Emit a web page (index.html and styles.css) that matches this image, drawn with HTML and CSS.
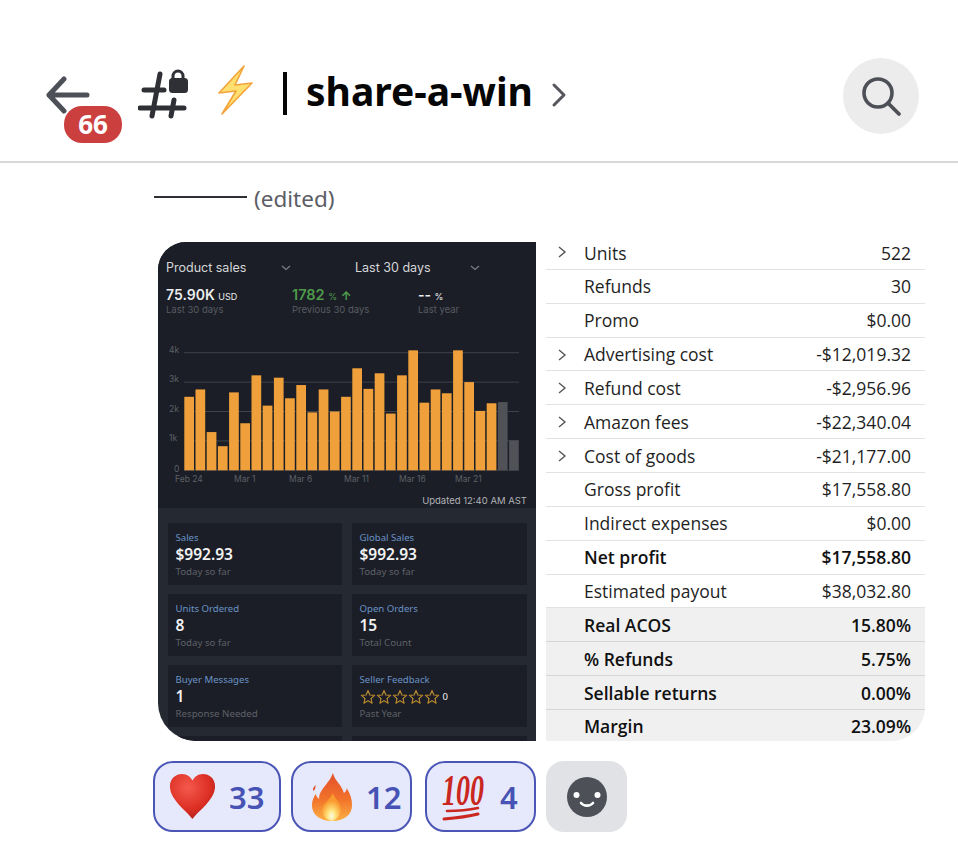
FILE: index.html
```html
<!DOCTYPE html>
<html lang="en">
<head>
    <meta charset="UTF-8">
    <title>share-a-win</title>
    <link rel="stylesheet" href="styles.css">
</head>
<body>
    <svg class="sprites" width="0" height="0">
        <symbol id="star" viewBox="0 0 16 16">
            <path d="M8 1.6l1.9 4.4 4.7.4-3.6 3.1 1.1 4.7L8 11.7l-4.1 2.5L5 9.5 1.4 6.4l4.7-.4z" fill="none" stroke="#b5872f" stroke-width="1.2" stroke-linejoin="round"/>
        </symbol>
        <symbol id="row-chevron" viewBox="0 0 10 14">
            <path d="M2 2l6 5-6 5" fill="none" stroke="#555" stroke-width="1.4"/>
        </symbol>
        <symbol id="dd-chevron" viewBox="0 0 10 6">
            <path d="M1 1l4 3.5L9 1" fill="none" stroke="#7b7f86" stroke-width="1.2"/>
        </symbol>
    </svg>

    <header class="header">
        <div class="back">
            <svg width="44" height="38" viewBox="0 0 44 38">
                <path d="M18 3L3 19l15 16M3 19h38" fill="none" stroke="#4e5058" stroke-width="5" stroke-linecap="round" stroke-linejoin="round"/>
            </svg>
            <span class="badge">66</span>
        </div>
        <svg class="hash" width="52" height="54" viewBox="0 0 52 54">
            <path d="M22 7l-8 42M36 33l-3 16M6 23h20M2 41h44" fill="none" stroke="#2e3035" stroke-width="5" stroke-linecap="round"/>
            <path d="M35 13v-4a5 5 0 0 1 10 0v4" fill="none" stroke="#2e3035" stroke-width="3"/>
            <rect x="31" y="11" width="19" height="15" rx="3.5" fill="#2e3035"/>
        </svg>
        <svg class="bolt" width="40" height="50" viewBox="0 0 40 50">
            <path d="M29 1L4 28l17-2-14 23 30-31-17 2z" fill="#ffdf70" stroke="#f2a33a" stroke-width="1.6" stroke-linejoin="round"/>
        </svg>
        <h1 class="title">share-a-win</h1>
        <svg class="title-chevron" width="16" height="26" viewBox="0 0 16 26">
            <path d="M3 3l10 10L3 23" fill="none" stroke="#55575d" stroke-width="3" stroke-linecap="round" stroke-linejoin="round"/>
        </svg>
        <div class="search">
            <svg width="44" height="44" viewBox="0 0 44 44">
                <circle cx="19" cy="19" r="14" fill="none" stroke="#4e5058" stroke-width="3.6"/>
                <path d="M29 29l11 11" stroke="#4e5058" stroke-width="3.8" stroke-linecap="round"/>
            </svg>
        </div>
    </header>

    <main class="message">
        <div class="edited-line">
            <span class="rule"></span>
            <span class="edited">(edited)</span>
        </div>

        <div class="shots">
            <div class="phone">
                <div class="phone-top">
                    <div class="pickers">
                        <div class="picker">Product sales <svg width="10" height="6"><use href="#dd-chevron"/></svg></div>
                        <div class="picker">Last 30 days <svg width="10" height="6"><use href="#dd-chevron"/></svg></div>
                    </div>
                    <div class="stats">
                        <div>
                            <div class="stat-value">75.90K <small>USD</small></div>
                            <div class="stat-sub">Last 30 days</div>
                        </div>
                        <div>
                            <div class="stat-value green">1782 <small>%</small> <small class="up">↑</small></div>
                            <div class="stat-sub">Previous 30 days</div>
                        </div>
                        <div>
                            <div class="stat-value">-- <small>%</small></div>
                            <div class="stat-sub">Last year</div>
                        </div>
                    </div>

                    <svg class="chart" width="378" height="150" viewBox="0 0 378 150">
                        <g class="grid">
                            <path d="M26 10.7H361M26 40.1H361M26 69.5H361M26 98.9H361M26 128.3H361"/>
                        </g>
                        <g class="axis">
                            <text x="11" y="11">4k</text>
                            <text x="11" y="40">3k</text>
                            <text x="11" y="70">2k</text>
                            <text x="11" y="99">1k</text>
                            <text x="16" y="130">0</text>
                            <text x="17" y="139.5">Feb 24</text>
                            <text x="76" y="139.5">Mar 1</text>
                            <text x="131" y="139.5">Mar 6</text>
                            <text x="186" y="139.5">Mar 11</text>
                            <text x="241" y="139.5">Mar 16</text>
                            <text x="297" y="139.5">Mar 21</text>
                        </g>
                        <g transform="translate(26.3,128.3) scale(1,-29.4)" fill="#f0a03a">
                            <rect x="0" width="9.7" height="2.5"/>
                            <rect x="11.2" width="9.7" height="2.75"/>
                            <rect x="22.4" width="9.7" height="1.3"/>
                            <rect x="33.6" width="9.7" height="0.82"/>
                            <rect x="44.8" width="9.7" height="2.65"/>
                            <rect x="56" width="9.7" height="1.6"/>
                            <rect x="67.2" width="9.7" height="3.23"/>
                            <rect x="78.4" width="9.7" height="2.2"/>
                            <rect x="89.6" width="9.7" height="3.15"/>
                            <rect x="100.8" width="9.7" height="2.45"/>
                            <rect x="112" width="9.7" height="2.9"/>
                            <rect x="123.2" width="9.7" height="1.97"/>
                            <rect x="134.4" width="9.7" height="2.75"/>
                            <rect x="145.6" width="9.7" height="2"/>
                            <rect x="156.8" width="9.7" height="2.5"/>
                            <rect x="168" width="9.7" height="3.47"/>
                            <rect x="179.2" width="9.7" height="2.77"/>
                            <rect x="190.4" width="9.7" height="3.3"/>
                            <rect x="201.6" width="9.7" height="1.93"/>
                            <rect x="212.8" width="9.7" height="3.23"/>
                            <rect x="224" width="9.7" height="4.08"/>
                            <rect x="235.2" width="9.7" height="2.3"/>
                            <rect x="246.4" width="9.7" height="2.75"/>
                            <rect x="257.6" width="9.7" height="2.62"/>
                            <rect x="268.8" width="9.7" height="4.08"/>
                            <rect x="280" width="9.7" height="3"/>
                            <rect x="291.2" width="9.7" height="2.02"/>
                            <rect x="302.4" width="9.7" height="2.28"/>
                            <rect x="313.6" width="9.7" height="2.32" fill="#505257"/>
                            <rect x="324.8" width="9.7" height="1.02" fill="#505257"/>
                        </g>
                    </svg>
                    <div class="updated">Updated 12:40 AM AST</div>
                </div>

                <div class="tiles">
                    <div class="tile">
                        <div class="tile-label">Sales</div>
                        <div class="tile-value">$992.93</div>
                        <div class="tile-sub">Today so far</div>
                    </div>
                    <div class="tile">
                        <div class="tile-label">Global Sales</div>
                        <div class="tile-value">$992.93</div>
                        <div class="tile-sub">Today so far</div>
                    </div>
                    <div class="tile">
                        <div class="tile-label">Units Ordered</div>
                        <div class="tile-value">8</div>
                        <div class="tile-sub">Today so far</div>
                    </div>
                    <div class="tile">
                        <div class="tile-label">Open Orders</div>
                        <div class="tile-value">15</div>
                        <div class="tile-sub">Total Count</div>
                    </div>
                    <div class="tile">
                        <div class="tile-label">Buyer Messages</div>
                        <div class="tile-value">1</div>
                        <div class="tile-sub">Response Needed</div>
                    </div>
                    <div class="tile">
                        <div class="tile-label">Seller Feedback</div>
                        <div class="tile-value stars">
                            <svg width="16" height="16"><use href="#star"/></svg>
                            <svg width="16" height="16"><use href="#star"/></svg>
                            <svg width="16" height="16"><use href="#star"/></svg>
                            <svg width="16" height="16"><use href="#star"/></svg>
                            <svg width="16" height="16"><use href="#star"/></svg>
                            <span>0</span>
                        </div>
                        <div class="tile-sub">Past Year</div>
                    </div>
                    <div class="tile"></div>
                    <div class="tile"></div>
                </div>
            </div>

            <div class="table">
                <div class="row first"><svg class="chev" width="10" height="14"><use href="#row-chevron"/></svg><span>Units</span><b>522</b></div>
                <div class="row"><span>Refunds</span><b>30</b></div>
                <div class="row"><span>Promo</span><b>$0.00</b></div>
                <div class="row"><svg class="chev" width="10" height="14"><use href="#row-chevron"/></svg><span>Advertising cost</span><b>-$12,019.32</b></div>
                <div class="row"><svg class="chev" width="10" height="14"><use href="#row-chevron"/></svg><span>Refund cost</span><b>-$2,956.96</b></div>
                <div class="row"><svg class="chev" width="10" height="14"><use href="#row-chevron"/></svg><span>Amazon fees</span><b>-$22,340.04</b></div>
                <div class="row"><svg class="chev" width="10" height="14"><use href="#row-chevron"/></svg><span>Cost of goods</span><b>-$21,177.00</b></div>
                <div class="row"><span>Gross profit</span><b>$17,558.80</b></div>
                <div class="row"><span>Indirect expenses</span><b>$0.00</b></div>
                <div class="row strong"><span>Net profit</span><b>$17,558.80</b></div>
                <div class="row"><span>Estimated payout</span><b>$38,032.80</b></div>
                <div class="row strong grey"><span>Real ACOS</span><b>15.80%</b></div>
                <div class="row strong grey"><span>% Refunds</span><b>5.75%</b></div>
                <div class="row strong grey"><span>Sellable returns</span><b>0.00%</b></div>
                <div class="row strong grey"><span>Margin</span><b>23.09%</b></div>
            </div>
        </div>

        <div class="reactions">
            <div class="pill pill-heart">
                <svg width="47" height="47" viewBox="0 0 50 50">
                    <defs>
                        <radialGradient id="heartFill" cx="40%" cy="30%" r="80%">
                            <stop offset="0" stop-color="#f4594c"/>
                            <stop offset="0.6" stop-color="#dd2f24"/>
                            <stop offset="1" stop-color="#a81c18"/>
                        </radialGradient>
                    </defs>
                    <path d="M25 49C20 41 1 29 1 14 1 6 7 1 14 1c5 0 9 3 11 7 2-4 6-7 11-7 7 0 13 5 13 13 0 15-19 27-24 35z" fill="url(#heartFill)"/>
                </svg>
                <span>33</span>
            </div>
            <div class="pill pill-fire">
                <svg width="42" height="50" viewBox="0 0 46 50" preserveAspectRatio="none">
                    <defs>
                        <linearGradient id="fireOuter" x1="0" y1="0" x2="0" y2="1">
                            <stop offset="0" stop-color="#e2502a"/>
                            <stop offset="0.55" stop-color="#f2732b"/>
                            <stop offset="1" stop-color="#fbb044"/>
                        </linearGradient>
                        <radialGradient id="fireInner" cx="50%" cy="82%" r="55%">
                            <stop offset="0" stop-color="#fffbe6"/>
                            <stop offset="0.4" stop-color="#ffe27a"/>
                            <stop offset="1" stop-color="#f99a2e"/>
                        </radialGradient>
                    </defs>
                    <path d="M24 1c2 8 10 12 12 20 2-1 3-3 3-5 4 6 6 11 6 17 0 10-9 16-22 16S1 43 1 33c0-4 2-8 4-11 1 2 2 4 4 5C8 18 20 12 24 1z" fill="url(#fireOuter)"/>
                    <path d="M2 17c1-2 2-3 3-4 0 2 0 4-2 6z" fill="#e2502a"/>
                    <path d="M24 21c1 5 8 8 9 16 0 6-5 11-10 12-6-1-11-5-11-11 0-6 9-10 12-17z" fill="url(#fireInner)"/>
                </svg>
                <span>12</span>
            </div>
            <div class="pill pill-hundred">
                <svg class="hundred-icon" width="42" height="50" viewBox="0 0 42 50">
                    <text class="hundred" transform="translate(0,33) scale(1,1.55)">100</text>
                    <path d="M5 39c10 0 22-1 31-3" fill="none" stroke="#c9271f" stroke-width="2.6" stroke-linecap="round"/>
                    <path d="M2 47c12-1 26-3 34-5" fill="none" stroke="#c9271f" stroke-width="3" stroke-linecap="round"/>
                </svg>
                <span>4</span>
            </div>
            <div class="add-reaction">
                <svg width="42" height="42" viewBox="0 0 42 42">
                    <circle cx="21" cy="21" r="20" fill="#4e5058"/>
                    <circle cx="10.5" cy="19" r="3" fill="#fff"/>
                    <circle cx="31.5" cy="19" r="3" fill="#fff"/>
                    <path d="M15 27c3 3.5 9 3.5 12 0" fill="none" stroke="#fff" stroke-width="2.6" stroke-linecap="round"/>
                </svg>
            </div>
        </div>
    </main>
</body>
</html>
```

FILE: styles.css
```css
body{
    margin: 0;
    background: #fff;
    font-family: 'Noto Sans', sans-serif;
    color: #060607;
}
.sprites{
    display: block;
    height: 0;
}
.header{
    display: flex;
    align-items: center;
    height: 131px;
    padding: 30px 39px 0 46px;
    border-bottom: 2px solid #d9d9d9;
}
.back{
    position: relative;
    display: flex;
    margin-top: -2px;
    margin-right: 48px;
}
.badge{
    position: absolute;
    left: 18px;
    top: 30px;
    width: 58px;
    height: 37px;
    border-radius: 18px;
    background: #cb3f3f;
    color: #fff;
    font-size: 26px;
    font-weight: 700;
    line-height: 37px;
    text-align: center;
}
.hash{
    margin-right: 25px;
    margin-top: -4px;
    flex: none;
}
.bolt{
    margin-right: 28px;
    margin-top: -12px;
    flex: none;
}
.title{
    margin: -10px 0 0 0;
    padding-left: 23px;
    font-size: 39px;
    font-weight: 700;
    line-height: 50px;
    position: relative;
}
.title::before{
    content: "";
    position: absolute;
    left: 0;
    top: 6px;
    width: 4px;
    height: 43px;
    background: #060607;
}
.title-chevron{
    margin-left: 18px;
    margin-top: -2px;
    flex: none;
}
.search{
    display: flex;
    align-items: center;
    justify-content: center;
    width: 76px;
    height: 76px;
    margin-left: auto;
    margin-top: 0;
    border-radius: 50%;
    background: #ececec;
}
.message{
    padding-left: 153px;
}
.edited-line{
    display: flex;
    align-items: center;
    height: 34px;
    margin-top: 18px;
}
.rule{
    width: 93px;
    height: 2px;
    margin: -3px 7px 0 1px;
    background: #2e3035;
}
.edited{
    color: #5c5e66;
    font-size: 22.5px;
}
.shots{
    display: grid;
    grid-template-columns: 378px 379px;
    column-gap: 10px;
    width: 767px;
    height: 499px;
    margin: 27px 0 0 5px;
    overflow: hidden;
    border-radius: 28px 6px 34px 38px;
}
.phone{
    display: flex;
    flex-direction: column;
    height: 499px;
    overflow: hidden;
    background: #252a32;
    font-family: 'Inter', sans-serif;
}
.phone-top{
    height: 266px;
    padding-top: 18px;
    box-sizing: border-box;
    background: #1b1e26;
}
.pickers{
    display: flex;
    gap: 64px;
    padding-left: 8px;
}
.picker{
    display: flex;
    align-items: center;
    justify-content: space-between;
    width: 125px;
    color: #d6d7d9;
    font-size: 12.5px;
    line-height: 16px;
}
.stats{
    display: grid;
    grid-template-columns: 126px 126px 1fr;
    margin-top: 11px;
    padding-left: 8px;
}
.stat-value{
    color: #eceded;
    font-size: 14px;
    font-weight: 600;
    line-height: 15px;
}
.stat-value small{
    font-size: 9px;
    font-weight: 400;
}
.stat-value .up{
    font-size: 12px;
    font-weight: 700;
}
.green{
    color: #4f9a4a;
    font-size: 14.5px;
}
.stat-sub{
    color: #585b62;
    font-size: 9.5px;
    line-height: 12px;
}
.chart{
    display: block;
    margin-top: 26px;
}
.grid path{
    stroke: #3e424a;
    stroke-width: 1;
    fill: none;
}
.axis text{
    fill: #5d6067;
    font-family: 'Inter', sans-serif;
    font-size: 8.5px;
}
.updated{
    margin-top: 1px;
    padding-right: 9px;
    color: #b0b2b6;
    font-size: 9.5px;
    line-height: 16px;
    text-align: right;
}
.tiles{
    display: grid;
    grid-template-columns: 174px 175px;
    grid-auto-rows: 62px;
    gap: 9px 10px;
    padding: 15px 0 0 9.5px;
    font-family: 'Noto Sans', sans-serif;
}
.tile{
    padding: 8px 8px 0;
    background: #1b1e26;
}
.tile-label{
    color: #6a93c6;
    font-size: 9.6px;
    line-height: 13px;
}
.tile-value{
    color: #f2f2f2;
    font-size: 15.5px;
    font-weight: 600;
    line-height: 21px;
}
.tile-sub{
    color: #5e6168;
    font-size: 9.7px;
    line-height: 13px;
}
.stars{
    display: flex;
    align-items: center;
    height: 21px;
}
.stars span{
    margin-left: 3px;
    font-size: 9.5px;
    font-weight: 400;
}
.table{
    font-family: 'Open Sans', sans-serif;
    font-size: 17.5px;
    color: #1f1f1f;
}
.row{
    position: relative;
    display: flex;
    align-items: center;
    height: 33.86px;
    padding: 0 14px 0 38px;
    box-sizing: border-box;
    border-bottom: 1px solid #e2e2e2;
}
.first{
    height: 27.9px;
    padding-bottom: 5px;
}
.first .chev{
    top: 3px;
}
.row b{
    margin-left: auto;
    font-weight: 400;
}
.chev{
    position: absolute;
    left: 11px;
    top: 10px;
}
.strong,
.strong b{
    font-weight: 600;
    color: #111;
}
.grey{
    background: #f0f0f0;
    border-bottom-color: #d6d6d6;
}
.reactions{
    display: flex;
    gap: 10px;
    margin-top: 20px;
}
.pill{
    display: flex;
    align-items: center;
    height: 71px;
    box-sizing: border-box;
    border: 2px solid #4a55b5;
    border-radius: 20px;
    background: #e6e8fb;
    color: #4752b5;
    font-size: 31px;
    font-weight: 600;
}
.pill svg{
    flex: none;
}
.pill-heart{
    width: 128px;
    padding-left: 14px;
    gap: 13px;
}
.pill-fire{
    width: 121px;
    padding-left: 18px;
    gap: 13px;
}
.pill-hundred{
    width: 111px;
    margin-left: 3px;
    padding-left: 15px;
    gap: 16px;
}
.hundred-icon{
    overflow: visible;
}
.hundred{
    fill: #c9271f;
    font-family: 'Liberation Serif', serif;
    font-size: 28px;
    font-style: italic;
    font-weight: 700;
}
.add-reaction{
    display: flex;
    align-items: center;
    justify-content: center;
    width: 81px;
    height: 71px;
    border-radius: 18px;
    background: #e1e2e5;
}
```
